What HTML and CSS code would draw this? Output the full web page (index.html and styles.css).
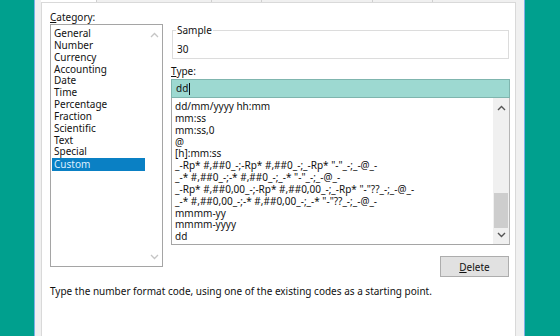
FILE: index.html
```html
<!DOCTYPE html>
<html>
<head>
<meta charset="utf-8">
<link rel="stylesheet" href="styles.css">
</head>
<body>
<div class="screen">
  <div class="desk-left"></div>
  <div class="window">
    <div class="tabstrip">
      <div class="tab t1"></div>
      <div class="tab t2"></div>
      <div class="tab t3"></div>
      <div class="tab t4"></div>
      <div class="tab t5"></div>
    </div>
    <div class="panel">
      <div class="columns">
        <div class="left-col">
          <div class="label"><u>C</u>ategory:</div>
          <div class="listbox cat-list">
            <div class="items">
              <div class="item">General</div>
              <div class="item">Number</div>
              <div class="item">Currency</div>
              <div class="item">Accounting</div>
              <div class="item">Date</div>
              <div class="item">Time</div>
              <div class="item">Percentage</div>
              <div class="item">Fraction</div>
              <div class="item">Scientific</div>
              <div class="item">Text</div>
              <div class="item">Special</div>
              <div class="item selected">Custom</div>
            </div>
            <div class="vscroll light">
              <svg class="arrow" width="9" height="6" viewBox="0 0 9 6"><path d="M1 5 L4.5 1.5 L8 5" fill="none" stroke="currentColor" stroke-width="1.3"/></svg>
              <div class="track"></div>
              <svg class="arrow" width="9" height="6" viewBox="0 0 9 6"><path d="M1 1 L4.5 4.5 L8 1" fill="none" stroke="currentColor" stroke-width="1.3"/></svg>
            </div>
          </div>
        </div>
        <div class="right-col">
          <fieldset class="sample">
            <legend>Sample</legend>
            <div class="sample-val">30</div>
          </fieldset>
          <div class="label type-label"><u>T</u>ype:</div>
          <div class="type-input">dd<span class="caret"></span></div>
          <div class="listbox type-list">
            <div class="items">
              <div class="item">dd/mm/yyyy hh:mm</div>
              <div class="item">mm:ss</div>
              <div class="item">mm:ss,0</div>
              <div class="item">@</div>
              <div class="item">[h]:mm:ss</div>
              <div class="item">_-Rp* #,##0_-;-Rp* #,##0_-;_-Rp* "-"_-;_-@_-</div>
              <div class="item">_-* #,##0_-;-* #,##0_-;_-* "-"_-;_-@_-</div>
              <div class="item">_-Rp* #,##0,00_-;-Rp* #,##0,00_-;_-Rp* "-"??_-;_-@_-</div>
              <div class="item">_-* #,##0,00_-;-* #,##0,00_-;_-* "-"??_-;_-@_-</div>
              <div class="item">mmmm-yy</div>
              <div class="item">mmmm-yyyy</div>
              <div class="item">dd</div>
            </div>
            <div class="vscroll dark">
              <svg class="arrow" width="9" height="6" viewBox="0 0 9 6"><path d="M1 5 L4.5 1.5 L8 5" fill="none" stroke="currentColor" stroke-width="1.4"/></svg>
              <div class="track"><div class="thumb"></div></div>
              <svg class="arrow" width="9" height="6" viewBox="0 0 9 6"><path d="M1 1 L4.5 4.5 L8 1" fill="none" stroke="currentColor" stroke-width="1.4"/></svg>
            </div>
          </div>
          <div class="btn-row">
            <button class="btn"><u>D</u>elete</button>
          </div>
        </div>
      </div>
      <div class="desc">Type the number format code, using one of the existing codes as a starting point.</div>
    </div>
  </div>
  <div class="desk-right"></div>
</div>
</body>
</html>
```

FILE: styles.css
```css
* { box-sizing: border-box; }
html, body {
  margin: 0;
  padding: 0;
  width: 560px;
  height: 336px;
  overflow: hidden;
  background: #00a08e;
  font-family: "Noto Sans", "Open Sans", sans-serif;
  font-size: 10px;
  color: #111;
}
.screen {
  display: flex;
  width: 560px;
  height: 336px;
}
.desk-left {
  width: 34px;
  background: #00a08e;
}
.desk-right {
  flex: 1;
  background: #00a08e;
}
.window {
  width: 491px;
  background: #f0f0f0;
  border-left: 1px solid #7db0e6;
  border-right: 1px solid #7db0e6;
  padding: 0 8px 0 6px;
  display: flex;
  flex-direction: column;
}
.tabstrip {
  height: 2px;
  display: flex;
  margin-left: 0;
}
.tab { height: 2px; border-right: 1px solid #d0d0d0; }
.tab.t1 { width: 56px; background: #fff; }
.tab.t2 { width: 115px; }
.tab.t3 { width: 50px; }
.tab.t4 { width: 111px; }
.tab.t5 { width: 60px; }
.panel {
  flex: 1;
  background: #fff;
  border: 1px solid #d9d9d9;
  border-bottom: none;
  padding: 8px 5px 0 8px;
}
.columns {
  display: flex;
  gap: 8px;
}
.left-col { width: 113px; }
.right-col {
  flex: 1;
  padding-top: 13px;
  display: flex;
  flex-direction: column;
}
.label {
  height: 12px;
  line-height: 12px;
}
.listbox {
  display: flex;
  border: 1px solid #a5a5a5;
  background: #fff;
}
.cat-list {
  margin-top: 1px;
  height: 243px;
}
.items {
  flex: 1;
  padding: 3px 1px 0 1px;
}
.item {
  height: 11.85px;
  line-height: 11.85px;
  padding-left: 2px;
  white-space: nowrap;
}
.item.selected {
  background: #0a80c4;
  color: #dcefff;
  height: 13px;
  line-height: 13px;
  margin-top: -0.6px;
}
.vscroll {
  width: 16px;
  display: flex;
  flex-direction: column;
  align-items: center;
}
.vscroll .arrow { margin: 7px 0 5px; }
.vscroll .arrow:last-child { margin: 5px 0 6px; }
.vscroll .track { flex: 1; width: 100%; position: relative; }
.vscroll.light { color: #c5c5c5; }
.vscroll.dark { color: #555; background: #f0f0f0; width: 16px; }
.thumb {
  position: absolute;
  left: 1px;
  right: 1px;
  top: 77px;
  height: 35px;
  background: #cdcdcd;
}
.sample {
  margin: 0 1px;
  padding: 7px 4px 3px 4px;
  border: 1px solid #dcdcdc;
  min-width: 0;
}
.sample legend {
  padding: 0 1px;
  margin-left: -1px;
  line-height: 12px;
  font-size: 10px;
}
.sample-val {
  line-height: 12px;
  height: 12px;
}
.type-label { margin-top: 6px; }
.type-input {
  margin-top: 2px;
  height: 19px;
  line-height: 17px;
  background: #9dd9d1;
  border: 1px solid #7fb5ae;
  padding-left: 4px;
  display: flex;
  align-items: center;
}
.caret {
  display: inline-block;
  width: 1px;
  height: 12px;
  background: #111;
  margin-left: 1px;
}
.type-list {
  height: 147px;
  border-top: none;
  border-right-color: #b5b5b5;
}
.type-list .items { padding-top: 3px; padding-left: 2px; }
.type-list .item { padding-left: 1px; }
.btn-row {
  display: flex;
  justify-content: flex-end;
  margin-top: 11px;
  padding-right: 1px;
}
.btn {
  width: 69px;
  height: 21px;
  background: #e1e1e1;
  border: 1px solid #adadad;
  font-family: inherit;
  font-size: 10px;
  color: #111;
  padding: 0;
}
.desc {
  margin-top: 8px;
  line-height: 12px;
  white-space: nowrap;
}
```
